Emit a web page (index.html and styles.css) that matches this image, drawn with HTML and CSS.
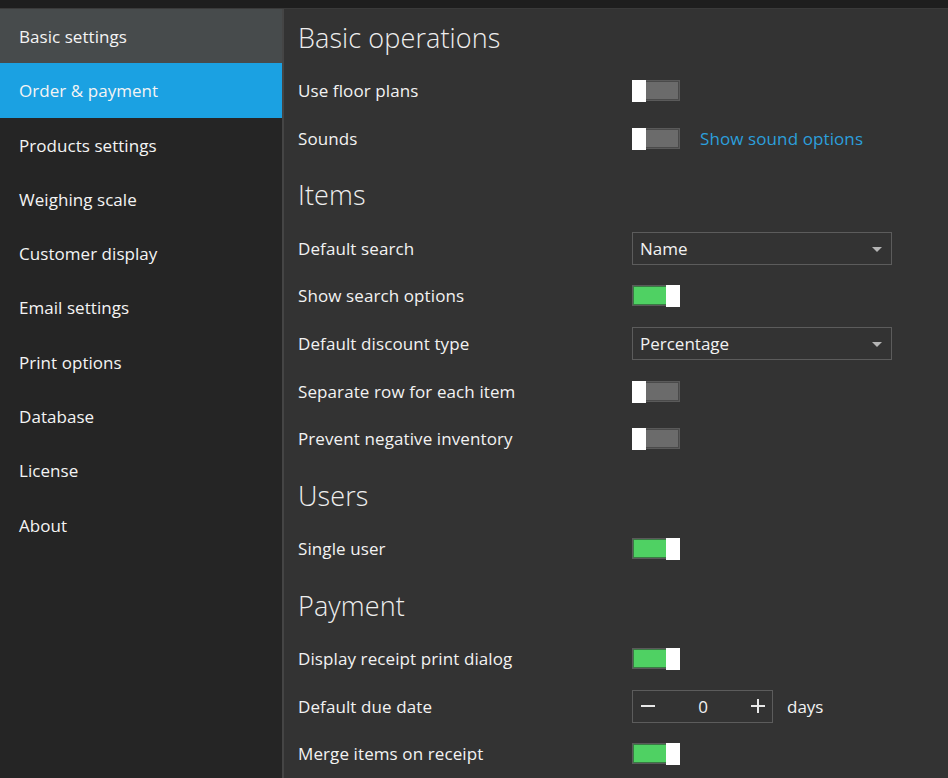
FILE: index.html
```html
<!DOCTYPE html>
<html>
<head>
<meta charset="utf-8">
<link rel="stylesheet" href="styles.css">
</head>
<body>
<div class="topbar"></div>
<div class="app">
  <nav class="sidebar">
    <div class="nav-item hover">Basic settings</div>
    <div class="nav-item active">Order &amp; payment</div>
    <div class="nav-item">Products settings</div>
    <div class="nav-item">Weighing scale</div>
    <div class="nav-item">Customer display</div>
    <div class="nav-item">Email settings</div>
    <div class="nav-item">Print options</div>
    <div class="nav-item">Database</div>
    <div class="nav-item">License</div>
    <div class="nav-item">About</div>
  </nav>
  <main class="content">
    <h2 class="section first">Basic operations</h2>
    <div class="row"><span class="label">Use floor plans</span><span class="toggle off"><span class="thumb"></span></span></div>
    <div class="row"><span class="label">Sounds</span><span class="ctrl"><span class="toggle off"><span class="thumb"></span></span><a class="link">Show sound options</a></span></div>

    <h2 class="section">Items</h2>
    <div class="row"><span class="label">Default search</span><span class="select">Name<span class="arrow"></span></span></div>
    <div class="row"><span class="label">Show search options</span><span class="toggle on"><span class="thumb"></span></span></div>
    <div class="row"><span class="label">Default discount type</span><span class="select">Percentage<span class="arrow"></span></span></div>
    <div class="row"><span class="label">Separate row for each item</span><span class="toggle off"><span class="thumb"></span></span></div>
    <div class="row"><span class="label">Prevent negative inventory</span><span class="toggle off"><span class="thumb"></span></span></div>

    <h2 class="section">Users</h2>
    <div class="row"><span class="label">Single user</span><span class="toggle on"><span class="thumb"></span></span></div>

    <h2 class="section">Payment</h2>
    <div class="row"><span class="label">Display receipt print dialog</span><span class="toggle on"><span class="thumb"></span></span></div>
    <div class="row"><span class="label">Default due date</span><span class="ctrl"><span class="numbox"><span class="minus"></span><span class="num">0</span><span class="plus"></span></span><span class="unit">days</span></span></div>
    <div class="row"><span class="label">Merge items on receipt</span><span class="toggle on"><span class="thumb"></span></span></div>
  </main>
</div>
</body>
</html>
```

FILE: styles.css
```css
html, body {
  margin: 0;
  padding: 0;
  background: #1f1f1f;
  font-family: "Open Sans", "Noto Sans", sans-serif;
  color: #f2f2f2;
  overflow: hidden;
}
.topbar {
  height: 8px;
  background: #1e1e1e;
  border-bottom: 1px solid #3a3a3a;
}
.app {
  display: flex;
  height: 769px;
}
.sidebar {
  width: 282px;
  background: #252525;
  border-right: 2px solid #454545;
  flex: none;
}
.nav-item {
  height: 54.3px;
  line-height: 56px;
  padding-left: 19px;
  font-size: 17px;
  color: #f4f4f4;
  letter-spacing: 0.05px;
}
.nav-item.hover { background: #474b4c; }
.nav-item.active { background: #1ba1e2; }
.content {
  flex: 1;
  background: #333333;
  padding-left: 14px;
}
.section {
  margin: 4px 0 0 0;
  height: 58px;
  line-height: 58px;
  font-size: 27px;
  font-weight: 300;
  color: #eeeeee;
  letter-spacing: 0.1px;
}
.section.first { margin-top: 0; }
.row {
  display: grid;
  grid-template-columns: 334px auto;
  align-items: center;
  height: 47.7px;
}
.label {
  font-size: 17px;
  color: #f2f2f2;
  letter-spacing: 0.1px;
}
.ctrl {
  display: flex;
  align-items: center;
}
.toggle {
  position: relative;
  display: block;
  width: 48px;
  height: 21px;
  box-sizing: border-box;
  border: 1px solid #5a5a5a;
}
.toggle.off { background: #6b6b6b; box-shadow: inset 0 0 0 1px #4a4a4a; }
.toggle.on { background: #4fd163; box-shadow: inset 0 0 0 1px #3a7a44; }
.thumb {
  position: absolute;
  top: -1px;
  width: 14px;
  height: 22px;
  background: #ffffff;
}
.toggle.off .thumb { left: -1px; }
.toggle.on .thumb { right: -1px; }
.link {
  margin-left: 20px;
  color: #2c9fdc;
  font-size: 17px;
  letter-spacing: 0.1px;
}
.select {
  position: relative;
  display: flex;
  align-items: center;
  width: 260px;
  height: 33px;
  box-sizing: border-box;
  border: 1px solid #5c5c5c;
  padding-left: 7px;
  font-size: 17px;
  color: #f2f2f2;
}
.arrow {
  position: absolute;
  right: 9px;
  top: 14px;
  width: 0;
  height: 0;
  border-left: 5px solid transparent;
  border-right: 5px solid transparent;
  border-top: 5px solid #b5b5b5;
}
.numbox {
  display: flex;
  align-items: center;
  justify-content: space-between;
  width: 141px;
  height: 33px;
  box-sizing: border-box;
  border: 1px solid #5c5c5c;
  padding: 0 7px 0 8px;
}
.minus {
  width: 14px;
  height: 2px;
  background: #e8e8e8;
}
.plus {
  position: relative;
  width: 14px;
  height: 14px;
}
.plus::before, .plus::after {
  content: "";
  position: absolute;
  background: #e8e8e8;
}
.plus::before { left: 0; top: 6px; width: 14px; height: 2px; }
.plus::after { left: 6px; top: 0; width: 2px; height: 14px; }
.num {
  font-size: 17px;
  color: #f2f2f2;
}
.unit {
  margin-left: 14px;
  font-size: 17px;
  color: #f2f2f2;
}
```
